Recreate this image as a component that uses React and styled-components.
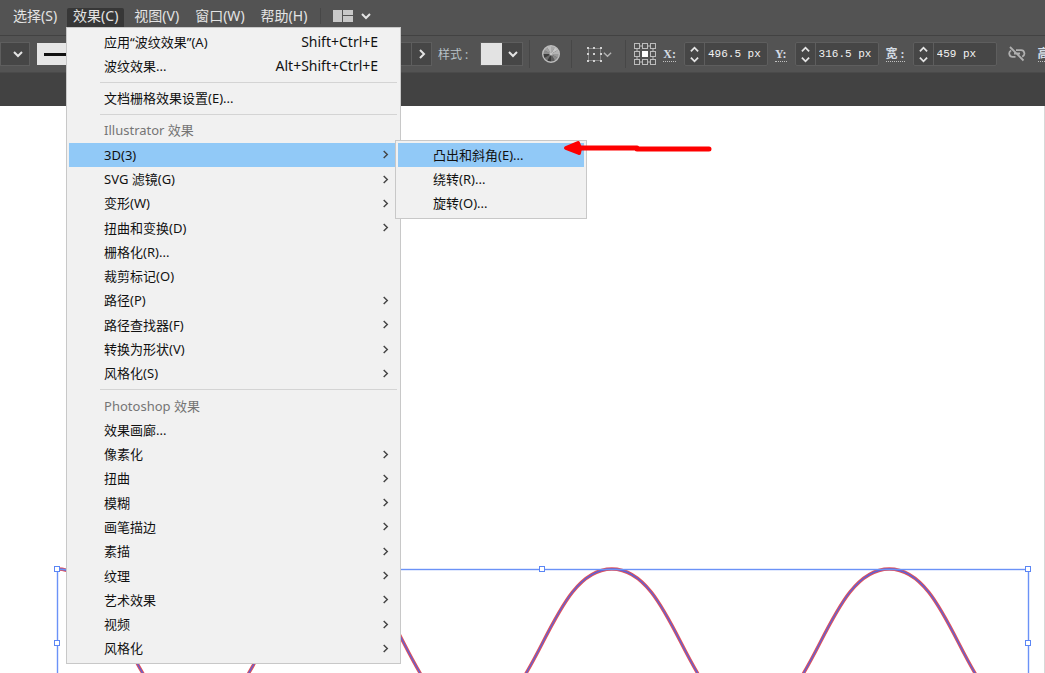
import React from 'react';
import styled, { createGlobalStyle } from 'styled-components';

const menus = ['选择(S)', '效果(C)', '视图(V)', '窗口(W)', '帮助(H)'];

const effectMenu = [
  { label: '应用“波纹效果”(A)', shortcut: 'Shift+Ctrl+E' },
  { label: '波纹效果...', shortcut: 'Alt+Shift+Ctrl+E' },
  { divider: true },
  { label: '文档栅格效果设置(E)...' },
  { divider: true },
  { heading: 'Illustrator 效果' },
  { label: '3D(3)', open: true, children: ['凸出和斜角(E)...', '绕转(R)...', '旋转(O)...'] },
  { label: 'SVG 滤镜(G)', more: true },
  { label: '变形(W)', more: true },
  { label: '扭曲和变换(D)', more: true },
  { label: '栅格化(R)...' },
  { label: '裁剪标记(O)' },
  { label: '路径(P)', more: true },
  { label: '路径查找器(F)', more: true },
  { label: '转换为形状(V)', more: true },
  { label: '风格化(S)', more: true },
  { divider: true },
  { heading: 'Photoshop 效果' },
  { label: '效果画廊...' },
  { label: '像素化', more: true },
  { label: '扭曲', more: true },
  { label: '模糊', more: true },
  { label: '画笔描边', more: true },
  { label: '素描', more: true },
  { label: '纹理', more: true },
  { label: '艺术效果', more: true },
  { label: '视频', more: true },
  { label: '风格化', more: true },
];

const Chevron = ({ dir = 'down', size = 10, width = 2 }) => {
  const paths = {
    down: 'M1 3l4 4 4-4',
    up: 'M1 7l4-4 4 4',
    right: 'M3 1l4 4-4 4',
  };
  return (
    <svg width={size} height={size} viewBox="0 0 10 10" fill="none" stroke="currentColor" strokeWidth={width}>
      <path d={paths[dir]} />
    </svg>
  );
};

const LayoutIcon = () => (
  <svg width="20" height="12" viewBox="0 0 20 12" fill="#c8c8c8">
    <rect width="9" height="12" />
    <rect x="10" width="10" height="5" />
    <rect x="10" y="6" width="10" height="6" />
  </svg>
);

// clockwise from the top
const shades = ['#a8a8a8', '#c6c6c6', '#b4b4b4', '#9a9a9a', '#8a8a8a', '#5c5c5c', '#3a3a3a', '#6a6a6a', '#3e3e3e', '#8c8c8c', '#a0a0a0', '#bcbcbc'];

const RecolorIcon = () => (
  <svg width="20" height="20" viewBox="-10 -10 20 20">
    {shades.map((fill, i) => {
      const a = (i * Math.PI) / 6 - Math.PI / 2;
      const b = a + Math.PI / 6;
      return (
        <path
          key={i}
          fill={fill}
          d={`M0 0L${8 * Math.cos(a)} ${8 * Math.sin(a)}A8 8 0 0 1 ${8 * Math.cos(b)} ${8 * Math.sin(b)}Z`}
        />
      );
    })}
    <circle r="8.3" fill="none" stroke="#bdbdbd" strokeWidth="1.4" />
    <circle r="1.6" fill="#c4c4c4" />
  </svg>
);

const TransformIcon = () => (
  <svg width="17" height="17" viewBox="0 0 17 17" fill="#d2d2d2">
    <rect x="2.5" y="2.5" width="12" height="12" fill="none" stroke="#858585" />
    {[1, 7, 14].map((y) => [1, 7, 14].map((x) => <rect key={`${x}-${y}`} x={x} y={y} width="2" height="2" />))}
  </svg>
);

const ReferencePointIcon = () => (
  <svg width="22" height="22" viewBox="0 0 22 22" fill="none" stroke="#bcbcbc">
    <path d="M5.500 3h3M13.500 3h3M5.500 19h3M13.500 19h3M3 5.500v3M3 13.500v3M19 5.500v3M19 13.500v3" />
    {[0.5, 8.5, 16.5].map((y) =>
      [0.5, 8.5, 16.5].map((x) =>
        x === 8.5 && y === 8.5 ? (
          <rect key="center" x="8" y="8" width="6" height="6" fill="#fff" stroke="none" />
        ) : (
          <rect key={`${x}-${y}`} x={x} y={y} width="5" height="5" />
        )
      )
    )}
  </svg>
);

const UnlinkIcon = () => (
  <svg width="18" height="16" viewBox="0 0 18 16" fill="none" stroke="#b0b0b0" strokeWidth="1.8">
    <path d="M7.500 10.800H4.600a3.300 3.300 0 0 1-1.400-6.300M8 4.200h5a3.300 3.300 0 0 1 1.200 6.400M6 7.500h6M2 1l13.500 13.500" />
  </svg>
);

const NumberField = ({ id, label, value }) => (
  <FieldGroup>
    <FieldLabel htmlFor={id}>{label}</FieldLabel>
    <FieldBox>
      <Stepper>
        <button aria-label={`${label} +`}><Chevron dir="up" size={9} /></button>
        <button aria-label={`${label} -`}><Chevron size={9} /></button>
      </Stepper>
      <FieldInput id={id} defaultValue={value} />
    </FieldBox>
  </FieldGroup>
);

const MenuItem = ({ item }) => {
  if (item.divider) return <Divider role="separator" />;
  if (item.heading) return <Heading>{item.heading}</Heading>;
  return (
    <Row>
      <RowButton $active={item.open}>
        <span>{item.label}</span>
        {item.shortcut && <Shortcut>{item.shortcut}</Shortcut>}
        {(item.more || item.children) && <Arrow><Chevron dir="right" size={9} width={1.6} /></Arrow>}
      </RowButton>
      {item.open && (
        <SubMenu>
          {item.children.map((child, i) => (
            <Row key={child}>
              <RowButton $active={i === 0}>{child}</RowButton>
            </Row>
          ))}
        </SubMenu>
      )}
    </Row>
  );
};

// wave and selection box
const BOX = { left: 57, right: 1028, top: 463, bottom: 611 };
const STEP = (BOX.right - BOX.left) / 7;

const wavePath = () => {
  let d = `M${BOX.left} ${BOX.top}`;
  for (let i = 0; i < 7; i++) {
    const x = BOX.left + i * STEP;
    const from = i % 2 ? BOX.bottom : BOX.top;
    const to = i % 2 ? BOX.top : BOX.bottom;
    d += `C${x + 63} ${from} ${x + STEP - 63} ${to} ${x + STEP} ${to}`;
  }
  return d;
};

const Artwork = () => {
  const midX = (BOX.left + BOX.right) / 2;
  const midY = (BOX.top + BOX.bottom) / 2;
  const handles = [
    [BOX.left, BOX.top], [midX, BOX.top], [BOX.right, BOX.top],
    [BOX.left, midY], [BOX.right, midY],
  ];
  return (
    <svg width="1043" height="620" fill="none">
      <path d={wavePath()} stroke="#e0525c" strokeWidth="3.3" />
      <path d={wavePath()} stroke="#5a62d8" strokeWidth="1.3" />
      <rect
        x={BOX.left + 0.5}
        y={BOX.top + 0.5}
        width={BOX.right - BOX.left}
        height={BOX.bottom - BOX.top}
        stroke="#6b92f7"
        strokeWidth="1.4"
      />
      {handles.map(([x, y]) => (
        <rect key={`${x}-${y}`} x={Math.floor(x) - 2.5} y={y - 2.5} width="5" height="5" fill="#fff" stroke="#5b86f5" />
      ))}
    </svg>
  );
};

const App = () => (
  <Window>
    <GlobalStyle />
    <MenuBar>
      {menus.map((name) => (
        <MenuSlot key={name}>
          <MenuButton $open={name === '效果(C)'}>{name}</MenuButton>
          {name === '效果(C)' && (
            <DropMenu>
              {effectMenu.map((item, i) => <MenuItem key={i} item={item} />)}
            </DropMenu>
          )}
        </MenuSlot>
      ))}
      <WorkspaceButton aria-label="Workspace">
        <LayoutIcon />
        <Chevron />
      </WorkspaceButton>
    </MenuBar>

    <ControlBar>
      <DropButton aria-label="Stroke weight"><Chevron /></DropButton>
      <StrokePreview />
      <OpacityBox>
        <FieldInput aria-label="Opacity" />
        <PopButton aria-label="More"><Chevron dir="right" /></PopButton>
      </OpacityBox>
      <StyleLabel>样式 :</StyleLabel>
      <StyleBox aria-label="样式">
        <Swatch />
        <Chevron />
      </StyleBox>
      <Section $width={42}>
        <IconButton aria-label="Recolor"><RecolorIcon /></IconButton>
      </Section>
      <Section $width={54}>
        <IconButton aria-label="Transform"><TransformIcon /><Chevron size={9} width={1.5} /></IconButton>
      </Section>
      <Section $width={38}>
        <IconButton aria-label="Reference point"><ReferencePointIcon /></IconButton>
      </Section>
      <NumberField id="pos-x" label="X:" value="496.5 px" />
      <NumberField id="pos-y" label="Y:" value="316.5 px" />
      <NumberField id="size-w" label="宽 :" value="459 px" />
      <LinkButton aria-label="Link"><UnlinkIcon /></LinkButton>
      <FieldLabel as="span">高 :</FieldLabel>
    </ControlBar>

    <TabStrip />
    <Canvas>
      <Artwork />
    </Canvas>

    <PointerArrow width="150" height="20" viewBox="0 0 150 20">
      <path d="M14 8H74M74 9H146" fill="none" stroke="#fe0000" strokeWidth="5" strokeLinecap="round" />
      <path d="M3 8L15 3L17 8L16 13Z" fill="#fe0000" stroke="#fe0000" strokeWidth="4" strokeLinejoin="round" />
    </PointerArrow>
  </Window>
);

const GlobalStyle = createGlobalStyle`
  body {
    margin: 0;
    background: #fff;
    overflow: hidden;
  }

  * {
    box-sizing: border-box;
  }

  button, input {
    font: inherit;
    color: inherit;
    margin: 0;
    padding: 0;
    border: 0;
    border-radius: 0;
    background: none;
  }

  svg {
    display: block;
    flex: none;
  }
`;

const Window = styled.div`
  position: relative;
  display: flex;
  flex-direction: column;
  height: 100vh;
  overflow: hidden;
  font-family: "Noto Sans", "Noto Sans CJK SC", sans-serif;
  font-size: 13px;
  color: #e4e4e4;
`;

const MenuBar = styled.nav`
  flex: none;
  display: flex;
  align-items: flex-start;
  gap: 4px;
  height: 36px;
  padding: 8px 7px 0;
  background: #535353;
  border-bottom: 1px solid #424242;
`;

const MenuSlot = styled.div`
  position: relative;
`;

const MenuButton = styled.button`
  display: block;
  height: 19px;
  padding: 0 6px 3px;
  font-size: 14px;
  line-height: 16px;
  white-space: nowrap;
  border-radius: 2px 2px 0 0;
  background: ${({ $open }) => ($open ? '#373737' : 'none')};
`;

const WorkspaceButton = styled.button`
  display: flex;
  align-items: center;
  gap: 8px;
  height: 16px;
  margin-left: 3px;
  padding-left: 12px;
  border-left: 1px solid #474747;
`;

const DropMenu = styled.ul`
  position: absolute;
  z-index: 2;
  top: 100%;
  left: -1px;
  display: flex;
  flex-direction: column;
  width: 335px;
  min-height: 637px;
  margin: 0;
  padding: 2px;
  list-style: none;
  color: #111;
  background: #f1f1f1;
  border: 1px solid #c8c8c8;
`;

const Row = styled.li`
  position: relative;
  flex: 1 0 24px;
  display: flex;
`;

const RowButton = styled.button`
  flex: 1;
  display: flex;
  align-items: center;
  justify-content: space-between;
  padding: 0 20px 1px 35px;
  line-height: 20px;
  text-align: left;
  white-space: nowrap;
  background: ${({ $active }) => ($active ? '#91c9f7' : 'none')};
`;

const Shortcut = styled.span`
  margin-left: auto;
  font-size: 14px;
`;

const Arrow = styled.span`
  margin-right: -12px;
  color: #444;
`;

const Heading = styled.li`
  flex: 1 0 24px;
  display: flex;
  align-items: center;
  padding: 0 0 1px 35px;
  line-height: 20px;
  color: #757575;
`;

const Divider = styled.li`
  flex: none;
  height: 1px;
  margin: 3px 1px 4px 31px;
  background: #d4d4d4;
`;

const SubMenu = styled.ul`
  position: absolute;
  top: -3px;
  left: calc(100% - 3px);
  display: flex;
  flex-direction: column;
  width: 192px;
  margin: 0;
  padding: 2px 2px 3px;
  list-style: none;
  background: #f1f1f1;
  border: 1px solid #c8c8c8;
`;

const ControlBar = styled.div`
  flex: none;
  display: flex;
  align-items: center;
  height: 37px;
  overflow: hidden;
  background: #535353;
  border-bottom: 1px solid #4a4a4a;

  > * {
    flex: none;
  }
`;

const DropButton = styled.button`
  display: flex;
  align-items: center;
  justify-content: flex-end;
  width: 30px;
  height: 24px;
  padding-right: 6px;
  background: #464646;
  border: 1px solid #5e5e5e;
`;

const StrokePreview = styled.div`
  width: 260px;
  height: 22px;
  margin-left: 7px;
  background: linear-gradient(#111, #111) 7px 10px / 240px 3px no-repeat #e6e6e6;
`;

const OpacityBox = styled.div`
  display: flex;
  width: 102px;
  height: 24px;
  margin-left: 33px;
  background: #464646;
  border: 1px solid #5e5e5e;
`;

const PopButton = styled.button`
  flex: none;
  display: flex;
  align-items: center;
  justify-content: center;
  width: 20px;
  border-left: 1px solid #5e5e5e;
`;

const StyleLabel = styled.span`
  margin-left: 6px;
  font-size: 12px;
  color: #b8c2c8;
`;

const StyleBox = styled.button`
  display: flex;
  align-items: center;
  gap: 6px;
  width: 43px;
  height: 24px;
  margin: 0 6px 0 12px;
  background: #464646;
  border: 1px solid #5e5e5e;
`;

const Swatch = styled.span`
  width: 21px;
  height: 22px;
  background: #e3e3e3;
`;

const Section = styled.div`
  display: flex;
  align-items: center;
  justify-content: center;
  width: ${({ $width }) => $width}px;
  height: 28px;
  border-left: 1px solid #474747;
`;

const IconButton = styled.button`
  display: flex;
  align-items: center;
  color: #b4b4b4;
`;

const FieldGroup = styled.div`
  display: flex;
  align-items: center;
  gap: 8px;
  margin-right: 7px;
`;

const FieldLabel = styled.label`
  font: bold 12px/14px "Liberation Serif", "Noto Sans CJK SC", serif;
  white-space: nowrap;
  color: #d4dce4;
  border-bottom: 1px dotted #c0c0c0;
`;

const FieldBox = styled.div`
  display: flex;
  width: 84px;
  height: 24px;
  background: #464646;
  border: 1px solid #5e5e5e;
  border-radius: 2px;
`;

const Stepper = styled.div`
  flex: none;
  display: flex;
  flex-direction: column;
  justify-content: center;
  gap: 1px;
  width: 20px;
  border-right: 1px solid #5e5e5e;

  button {
    display: flex;
    justify-content: center;
  }
`;

const FieldInput = styled.input`
  flex: 1;
  min-width: 0;
  padding-left: 3px;
  font: 11px "Liberation Mono", monospace;
  color: #f2f2f2;
`;

const LinkButton = styled.button`
  margin: 0 12px 0 4px;
`;

const TabStrip = styled.div`
  flex: none;
  height: 33px;
  background: #424242;
`;

const Canvas = styled.main`
  flex: 1;
  min-height: 0;
  overflow: hidden;
  background: #fff;
  border-right: 1px solid #d8d8d8;
`;

const PointerArrow = styled.svg`
  position: absolute;
  z-index: 3;
  top: 140px;
  left: 563px;
`;

export default App;
